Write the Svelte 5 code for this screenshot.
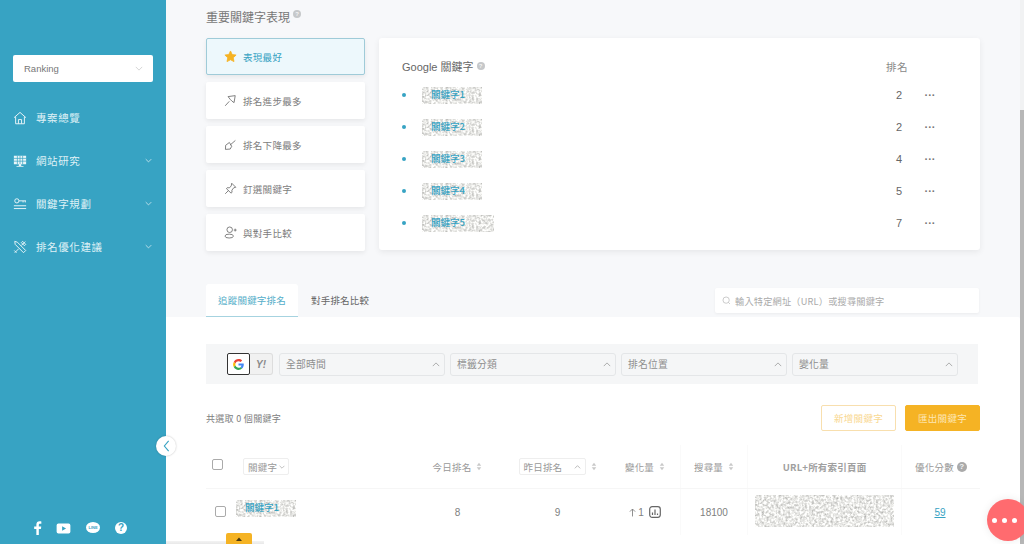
<script>
  const nav = [
    { label: '專案總覽', icon: 'home', arrow: false },
    { label: '網站研究', icon: 'monitor', arrow: true },
    { label: '關鍵字規劃', icon: 'key', arrow: true },
    { label: '排名優化建議', icon: 'tools', arrow: true }
  ];
  const tiles = [
    { label: '表現最好', icon: 'star', active: true },
    { label: '排名進步最多', icon: 'up' },
    { label: '排名下降最多', icon: 'down' },
    { label: '釘選關鍵字', icon: 'pin' },
    { label: '與對手比較', icon: 'user' }
  ];
  const keywords = [
    { name: '關鍵字1', rank: 2 },
    { name: '關鍵字2', rank: 2 },
    { name: '關鍵字3', rank: 4 },
    { name: '關鍵字4', rank: 5 },
    { name: '關鍵字5', rank: 7, wide: true }
  ];
  const filters = ['全部時間', '標籤分類', '排名位置', '變化量'];
</script>

{#snippet noise()}
  <svg class="noise" aria-hidden="true"><rect width="100%" height="100%" filter="url(#mosaic)" /></svg>
{/snippet}

{#snippet chev(up = false, cls = '')}
  <svg class="chev {cls}" viewBox="0 0 10 6" aria-hidden="true"><path d={up ? 'M1 5l4-4 4 4' : 'M1 1l4 4 4-4'} /></svg>
{/snippet}

{#snippet sort()}
  <svg class="sort" viewBox="0 0 8 12" aria-hidden="true"><path d="M4 1l3 4H1zM4 11L1 7h6z" /></svg>
{/snippet}

{#snippet help(cls = '')}
  <span class="help {cls}">?</span>
{/snippet}

{#snippet navIcon(name)}
  <svg class="nav-icon" viewBox="0 0 16 16" aria-hidden="true">
    {#if name === 'home'}
      <path d="M1.2 7.6L8 1.6l6.8 6M3 6.4v8.2h10V6.4M6.2 14.6V9.8h3.6v4.8" />
    {:else if name === 'monitor'}
      <path class="solid" d="M1 2h14v9.6H1zM6.6 11.6h2.8v2H12v1H4v-1h2.6z" />
      <path class="cut" d="M1 5h14M1 8.2h14M5 2v9.6M8 2v9.6M11 2v9.6" />
    {:else if name === 'key'}
      <circle cx="4.4" cy="4.4" r="2.4" />
      <path d="M6.8 4.4h8M11.5 4.4v1.8M14 4.4v1.8M1 10h14M1 13.2h14" />
    {:else}
      <path d="M2 1.5l3 1 9.5 9.5-2.5 2.5L2.5 5zM2 14.5l4.5-4.5M14 1.8L9.5 6.3M11 1.5l3.5 3.5-1.5 1.5L9.5 3zM1.5 12l2.5 2.5" />
    {/if}
  </svg>
{/snippet}

{#snippet tileIcon(name)}
  <svg class="tile-icon" viewBox="0 0 16 16" aria-hidden="true">
    {#if name === 'star'}
      <path class="star" d="M8 1.2l2.1 4.4 4.8.6-3.5 3.3.9 4.8L8 12l-4.3 2.3.9-4.8L1.1 6.2l4.8-.6z" />
    {:else if name === 'up'}
      <path d="M1.5 14.5l5-5.5M5 3.2l8.8-1.2-1.4 8.6-2.6-1.8-1.8-1.8z" />
    {:else if name === 'down'}
      <path d="M14 3L7.6 8.6M6.6 5.5L9.5 10.2 7.6 13.6 1.8 14l.2-5z" />
    {:else if name === 'pin'}
      <path d="M1.5 14.5l4-4M9.5 1.5l5 5-2.5.6-2.3 3 .2 2.6-1.2 1L3 8.200l1-1.200 2.700.200 2.200-2.400z" />
    {:else}
      <circle cx="7" cy="4.600" r="3.400" />
      <ellipse cx="6.400" cy="12.400" rx="5.200" ry="2.400" />
      <path d="M12 5h3.500M13.750 3.250v3.500" />
    {/if}
  </svg>
{/snippet}

<svg class="defs" aria-hidden="true">
  <filter id="mosaic" x="0" y="0" width="100%" height="100%" color-interpolation-filters="sRGB">
    <feTurbulence type="fractalNoise" baseFrequency="0.42" numOctaves="2" seed="4" />
    <feColorMatrix values="0.55 0 0 0 0.64  0.55 0 0 0 0.64  0.55 0 0 0 0.63  0 0 0 0 1" />
  </filter>
</svg>

<div class="page">
  <aside class="sidebar">
    <div class="project"><span>Ranking</span>{@render chev(false, 'project-chev')}</div>
    <nav class="nav">
      {#each nav as item}
        <div class="nav-item">
          {@render navIcon(item.icon)}
          <span class="nav-label">{item.label}</span>
          {#if item.arrow}{@render chev(false, 'nav-chev')}{/if}
        </div>
      {/each}
    </nav>
    <div class="social">
      <svg viewBox="0 0 10 16" class="s-f" aria-hidden="true"><path d="M6.500 16V9h2.400l.4-2.800H6.500V4.500c0-.8.300-1.400 1.400-1.400h1.500V.600C9.100.500 8.300.400 7.400.400 5.200.400 3.700 1.700 3.700 4.200v2H1.200V9h2.500v7z" /></svg>
      <svg viewBox="0 0 16 12" class="s-y" aria-hidden="true"><path fill-rule="evenodd" d="M2.500.500h11a2 2 0 0 1 2 2v7a2 2 0 0 1-2 2h-11a2 2 0 0 1-2-2v-7a2 2 0 0 1 2-2zM6.500 3.500v5l4.300-2.500z" /></svg>
      <span class="s-line"><span>LINE</span></span>
      <span class="s-q">?</span>
    </div>
  </aside>

  <main class="main">
    <h2 class="title">重要關鍵字表現 {@render help('help-title')}</h2>
    <section class="top">
      <div class="tiles">
        {#each tiles as t}
          <div class="tile" class:active={t.active}>
            {@render tileIcon(t.icon)}
            <span>{t.label}</span>
          </div>
        {/each}
      </div>
      <div class="card">
        <div class="card-head">
          <span class="card-title">Google 關鍵字 {@render help('help-title')}</span>
          <span class="rank-head">排名</span>
        </div>
        {#each keywords as k}
          <div class="kw-row">
            <i class="bullet"></i>
            <div class="kw-name" class:wide={k.wide}>
              {@render noise()}
              <a href="#top">{k.name}</a>
            </div>
            <span class="rank">{k.rank}</span>
            <span class="more">···</span>
          </div>
        {/each}
      </div>
    </section>

    <div class="tabbar">
      <div class="tab on">追蹤關鍵字排名</div>
      <div class="tab">對手排名比較</div>
      <div class="search">
        <svg viewBox="0 0 12 12" aria-hidden="true"><circle cx="5.500" cy="5.500" r="4.200" /><path d="M8.600 8.600l2 2" /></svg>
        <span>輸入特定網址（URL）或搜尋關鍵字</span>
      </div>
    </div>

    <section class="panel">
      <div class="filters">
        <div class="engines">
          <span class="engine g">
            <svg viewBox="0 0 48 48" aria-hidden="true">
              <path fill="#ea4335" d="M24 9.500c3.500 0 6.700 1.300 9.200 3.400l6.600-6.600C35.700 2.600 30.200.500 24 .500 15 .500 7.200 5.700 3.300 13.200l7.700 6C12.900 13.500 18 9.500 24 9.500z" />
              <path fill="#4285f4" d="M47 24.500c0-1.600-.2-3.200-.4-4.700H24v9.100h13c-.6 3-2.300 5.500-4.800 7.200l7.500 5.800C44.100 37.800 47 31.700 47 24.500z" />
              <path fill="#fbbc05" d="M11 28.800c-.5-1.500-.8-3.100-.8-4.800s.3-3.300.8-4.800l-7.700-6C1.500 16.500.500 20.100.500 24s1 7.500 2.800 10.800z" />
              <path fill="#34a853" d="M24 47.500c6.200 0 11.500-2.100 15.700-5.600l-7.500-5.800c-2.100 1.400-4.900 2.300-8.200 2.300-6 0-11.100-4-13-9.600l-7.700 6C7.200 42.300 15 47.500 24 47.500z" />
            </svg>
          </span>
          <span class="engine y">Y!</span>
        </div>
        {#each filters as f}
          <div class="select"><span>{f}</span>{@render chev(true)}</div>
        {/each}
      </div>

      <div class="actions">
        <span class="count">共選取 0 個關鍵字</span>
        <button class="btn ghost">新增關鍵字</button>
        <button class="btn solid-btn">匯出關鍵字</button>
      </div>

      <div class="table">
        <div class="thead">
          <div class="cell"><i class="check head-check"></i></div>
          <div class="cell start"><span class="mini kw-select">關鍵字{@render chev(false)}</span></div>
          <div class="cell">今日排名{@render sort()}</div>
          <div class="cell"><span class="mini y-select">昨日排名{@render chev(true)}</span>{@render sort()}</div>
          <div class="cell">變化量{@render sort()}</div>
          <div class="cell sep">搜尋量{@render sort()}</div>
          <div class="cell sep bold">URL+所有索引頁面</div>
          <div class="cell sep">優化分數{@render help('help-table')}</div>
        </div>
        <div class="trow">
          <div class="cell"><i class="check"></i></div>
          <div class="cell start"><div class="kw-name row-kw">{@render noise()}<a href="#top">關鍵字1</a></div></div>
          <div class="cell val">8</div>
          <div class="cell val">9</div>
          <div class="cell val change">
            <svg class="arrow" viewBox="0 0 8 10" aria-hidden="true"><path d="M4 9.500V1M1 4l3-3 3 3" /></svg>1
            <svg class="chart" viewBox="0 0 12 12" aria-hidden="true"><rect x=".7" y=".7" width="10.600" height="10.600" rx="2.500" /><path d="M3.500 9V6.500M6 9V3.500M8.500 9V7.500" /></svg>
          </div>
          <div class="cell val sep">18100</div>
          <div class="cell sep"><div class="url-patch">{@render noise()}</div></div>
          <div class="cell sep"><a class="score" href="#top">59</a></div>
        </div>
      </div>
    </section>
  </main>

  <div class="scrollbar"><i></i></div>

  <button class="collapse" aria-label="收合">
    <svg viewBox="0 0 8 14" aria-hidden="true"><path d="M6.500 1L1.500 7l5 6" /></svg>
  </button>
  <div class="sticky-line"></div>
  <button class="sticky-tab" aria-label="展開"><svg viewBox="0 0 8 5" aria-hidden="true"><path d="M4 .5L8 5H0z" /></svg></button>
  <button class="fab" aria-label="更多"><i></i><i></i><i></i></button>
</div>

<style>
  :global(body) {
    margin: 0;
    font-family: "Noto Sans CJK TC", "Liberation Sans", sans-serif;
    color: #777;
  }
  .defs { position: absolute; width: 0; height: 0; }
  .page {
    position: relative;
    display: flex;
    width: 1024px;
    height: 544px;
    overflow: hidden;
    background: #f7f8fa;
  }

  /* sidebar */
  .sidebar {
    width: 166px;
    flex: none;
    box-sizing: border-box;
    padding: 55px 13px 0;
    background: #37a3c3;
    display: flex;
    flex-direction: column;
    color: #dff1f6;
  }
  .project {
    height: 27px;
    box-sizing: border-box;
    width: 140px;
    padding: 0 10px 0 11px;
    display: flex;
    align-items: center;
    justify-content: space-between;
    background: #fff;
    border-radius: 2px;
    font: 9.5px "Liberation Sans", sans-serif;
    color: #777;
  }
  .chev { width: 8px; height: 5px; fill: none; stroke: #9a9a9a; stroke-width: 1; flex: none; }
  :global(.project-chev) { stroke: #ccc !important; }
  .nav { margin-top: 14px; display: flex; flex-direction: column; }
  .nav-item { height: 43px; display: flex; align-items: center; }
  .nav-icon { width: 14px; height: 14px; fill: none; stroke: #e8f5f8; stroke-width: 1.100; flex: none; }
  .nav-icon .solid { fill: #e8f5f8; stroke: none; }
  .nav-icon .cut { stroke: #37a3c3; stroke-width: .8; }
  .nav-label { margin-left: 9px; font-size: 10.500px; letter-spacing: .6px; flex: 1; white-space: nowrap; }
  :global(.nav-chev) { stroke: #e8f5f8 !important; width: 7px !important; margin-right: 1px; }
  .social {
    margin-top: auto;
    margin-bottom: 9px;
    padding-left: 19px;
    height: 14px;
    display: flex;
    align-items: center;
    gap: 0;
    position: relative;
  }
  .social svg { fill: #fff; flex: none; }
  .s-f { width: 9px; height: 14px; margin-left: 1px; }
  .s-y { width: 15px; height: 11px; margin-left: 14px; }
  .s-line {
    margin-left: 15px;
    width: 14px; height: 11px; border-radius: 50%;
    background: #fff; flex: none;
    display: flex; align-items: center; justify-content: center;
    margin-top: -2px;
  }
  .s-line span { font: bold 4px "Liberation Sans", sans-serif; color: #37a3c3; }
  .s-q {
    margin-left: 15px;
    width: 12px; height: 12px; border-radius: 50%;
    background: #fff; color: #37a3c3;
    font: bold 10px/12px "Liberation Sans", sans-serif;
    text-align: center; flex: none;
  }

  /* main */
  .main { flex: 1; min-width: 0; display: flex; flex-direction: column; }
  .title {
    margin: 9px 0 0 40px;
    height: 16px;
    display: flex;
    align-items: center;
    gap: 3px;
    font-size: 12px;
    line-height: 16px;
    font-weight: 400;
    color: #777;
  }
  .help {
    display: inline-block;
    width: 8px; height: 8px;
    border-radius: 50%;
    background: #c6c8ca;
    color: #f4f4f4;
    font: bold 6px/8px "Liberation Sans", sans-serif;
    text-align: center;
  }
  :global(.help-title) { transform: translateY(-3px); }
  :global(.help-table) { width: 10px !important; height: 10px !important; line-height: 10px !important; font-size: 8px !important; background: #aaa !important; margin-left: 3px; }
  .top { display: flex; gap: 14px; margin: 13px 0 0 40px; width: 774px; }
  .tiles { width: 159px; flex: none; display: flex; flex-direction: column; gap: 7px; }
  .tile {
    height: 37px;
    box-sizing: border-box;
    background: #fff;
    border-radius: 2px;
    box-shadow: 0 2px 5px rgba(0, 0, 0, .07);
    display: flex;
    align-items: center;
    padding-left: 18px;
    gap: 6px;
    font-size: 9.500px;
    letter-spacing: .3px;
    color: #7d7d7d;
  }
  .tile.active { background: #edf8fc; border: 1px solid #9fcbd8; padding-left: 17px; color: #37a3c3; }
  .tile-icon { width: 13px; height: 13px; fill: none; stroke: #666; stroke-width: 1; flex: none; }
  .tile-icon .star { fill: #f5b324; stroke: #f5b324; }
  .card {
    flex: 1;
    height: 212px;
    box-sizing: border-box;
    background: #fff;
    border-radius: 3px;
    box-shadow: 0 2px 6px rgba(0, 0, 0, .07);
    padding: 15px 39px 0 23px;
  }
  .card-head { height: 26px; display: flex; align-items: center; justify-content: space-between; }
  .card-title { font: 11px "Liberation Sans", "Noto Sans CJK TC", sans-serif; color: #666; }
  .rank-head { width: 62px; box-sizing: border-box; padding-left: 7px; font-size: 10.500px; color: #888; letter-spacing: .4px; }
  .kw-row { height: 32px; display: flex; align-items: center; }
  .bullet { width: 4px; height: 4px; border-radius: 50%; background: #37a3c3; flex: none; margin-right: 16px; }
  .kw-row:first-of-type { margin-top: 0; }
  .kw-name {
    width: 60px;
    height: 17px;
    display: grid;
  }
  .kw-name.wide { width: 72px; }
  .kw-name a {
    grid-area: 1 / 1;
    position: relative;
    padding-left: 9px;
    font-size: 9.500px;
    font-weight: 500;
    line-height: 15px;
    color: #37a3c3;
    text-decoration: none;
    white-space: nowrap;
  }
  .noise { grid-area: 1 / 1; width: 100%; height: 100%; display: block; }
  .rank { margin-left: auto; width: 40px; text-align: center; font: 11px "Liberation Sans", sans-serif; color: #666; }
  .more { width: 22px; text-align: center; font: bold 11px "Liberation Sans", sans-serif; color: #777; }

  /* tabs */
  .tabbar { margin: 33px 0 0 40px; width: 773px; height: 33px; display: flex; align-items: stretch; }
  .tab { padding: 0 13px; font-size: 9.500px; line-height: 33px; letter-spacing: .2px; color: #666; white-space: nowrap; }
  .tab.on { width: 92px; padding: 0; box-sizing: border-box; text-align: center; background: #fff; color: #55aec9; border-bottom: 1px solid #a6d3e0; border-radius: 3px 3px 0 0; }
  .search {
    margin: 4px 0 4px auto;
    width: 264px;
    box-sizing: border-box;
    padding-left: 7px;
    background: #fff;
    border-radius: 2px;
    box-shadow: 0 1px 3px rgba(0, 0, 0, .05);
    display: flex;
    align-items: center;
    gap: 4px;
    font-size: 9.200px;
    letter-spacing: .2px;
    color: #aaa;
    white-space: nowrap;
  }
  .search svg { width: 9px; height: 9px; fill: none; stroke: #bbb; stroke-width: 1; flex: none; }

  /* panel */
  .panel { flex: 1; background: #fff; padding: 27px 0 0 40px; border-radius: 0 2px 0 0; min-height: 0; margin-right: 0; }
  .filters {
    width: 772px;
    height: 40px;
    box-sizing: border-box;
    background: #f5f6f7;
    padding: 0 20px 0 21px;
    display: flex;
    align-items: center;
    gap: 5px;
  }
  .engines { display: flex; margin-right: 1px; }
  .engine {
    width: 23px; height: 22px;
    box-sizing: border-box;
    display: flex; align-items: center; justify-content: center;
  }
  .engine.g { border: 1.500px solid #333; border-radius: 2px; background: #fff; }
  .engine.g svg { width: 11px; height: 11px; }
  .engine.y {
    border: 1px solid #ddd; border-left: none; border-radius: 0 3px 3px 0;
    background: #f1f1f1;
    font: italic bold 10px "Liberation Sans", sans-serif; color: #8a8a8a;
  }
  .select {
    flex: 1;
    height: 23px;
    box-sizing: border-box;
    border: 1px solid #e4e6e8;
    border-radius: 3px;
    background: #f5f6f7;
    padding: 0 4px 0 6px;
    display: flex;
    align-items: center;
    justify-content: space-between;
    font-size: 9.800px;
    letter-spacing: .2px;
    color: #8e8e8e;
  }
  .actions { margin-top: 21px; width: 774px; height: 26px; display: flex; align-items: center; gap: 9px; }
  .count { margin-right: auto; font-size: 9px; letter-spacing: .3px; color: #808080; }
  .btn {
    width: 75px; height: 26px;
    border-radius: 2px;
    padding: 0;
    font: 9.500px "Noto Sans CJK TC", sans-serif;
    letter-spacing: .3px;
    cursor: pointer;
  }
  .ghost { background: #fff; border: 1px solid #f8dfae; color: #f9d891; }
  .solid-btn { background: #f5b324; border: 1px solid #f5b324; color: #fde6b4; }

  /* table */
  .table { width: 774px; margin-top: 14px; }
  .thead, .trow {
    display: grid;
    grid-template-columns: 30px 174px 95px 105px 70px 67px 154px 79px;
  }
  .thead { height: 43px; border-bottom: 1px solid #f6f6f6; font-size: 9.500px; letter-spacing: .2px; color: #999; box-sizing: content-box; }
  .trow { height: 46px; }
  .cell { display: flex; align-items: center; justify-content: center; min-width: 0; white-space: nowrap; }
  .cell.start { justify-content: flex-start; }
  .sep { border-left: 1px solid #fafafa; }
  .bold { font-weight: 700; color: #a0a0a0; }
  .check { width: 9px; height: 9px; border: 1px solid #aaa; border-radius: 2px; display: block; background: #fff; }
  .head-check { transform: translate(-4px, -2px); }
  .trow .check { transform: translate(-1px, -1px); }
  .sort { width: 6px; height: 9px; fill: #c9c9c9; margin-left: 5px; flex: none; }
  .mini {
    display: inline-flex;
    align-items: center;
    height: 17px;
    box-sizing: border-box;
    border: 1px solid #eee;
    border-radius: 2px;
    padding: 0 4px;
    font-size: 9.500px;
    color: #999;
    background: #fff;
  }
  .kw-select { margin-left: 7px; width: 46px; gap: 2px; padding: 0 3px 0 4px; }
  .kw-select .chev { width: 6px; height: 4px; }
  .y-select { width: 67px; justify-content: space-between; }
  .y-select .chev { width: 7px; height: 4px; }
  .val { font: 10px "Liberation Sans", sans-serif; color: #808080; }
  .row-kw { width: 60px; height: 17px; margin-top: -8px; }
  .change { gap: 2px; }
  .arrow { width: 7px; height: 9px; fill: none; stroke: #808080; stroke-width: 1; }
  .chart { width: 12px; height: 12px; fill: none; stroke: #666; stroke-width: 1.200; margin-left: 3px; }
  .url-patch { width: 139px; height: 32px; display: grid; margin-top: -2px; }
  .score { font: 10px "Liberation Sans", sans-serif; color: #37a3c3; text-decoration: underline; transform: translateX(-1px); }

  /* scrollbar */
  .scrollbar { width: 4px; flex: none; background: #f1f2f3; display: flex; flex-direction: column; justify-content: flex-end; }
  .scrollbar i { display: block; height: 434px; background: #b7b7b7; }

  /* overlays */
  .collapse {
    position: absolute; left: 156px; top: 436px;
    width: 20px; height: 20px; padding: 0;
    border: none; border-radius: 50%;
    background: #fff;
    box-shadow: 0 0 2px rgba(0, 0, 0, .25);
    display: flex; align-items: center; justify-content: center;
  }
  .collapse svg { width: 7px; height: 12px; fill: none; stroke: #37a3c3; stroke-width: 1.300; }
  .sticky-line {
    position: absolute; left: 166px; bottom: 0;
    width: 98px; height: 3px;
    background: linear-gradient(#f3f3f3, #e8e8e8);
  }
  .sticky-tab {
    position: absolute; left: 226px; top: 533px;
    width: 26px; height: 11px; padding: 0;
    border: none; border-radius: 2px 2px 0 0;
    background: #f5b324;
    display: flex; justify-content: center; padding-top: 4px;
  }
  .sticky-tab svg { width: 6px; height: 4px; fill: #4a3a10; }
  .fab {
    position: absolute; left: 987px; top: 499px;
    width: 42px; height: 42px; padding: 0 7px 0 0;
    border: none; border-radius: 50%;
    background: #ff6b6f;
    display: flex; align-items: center; justify-content: center; gap: 5px;
    box-shadow: 0 0 8px rgba(0, 0, 0, .08);
  }
  .fab i { width: 5px; height: 5px; border-radius: 50%; background: #fff; }
</style>
